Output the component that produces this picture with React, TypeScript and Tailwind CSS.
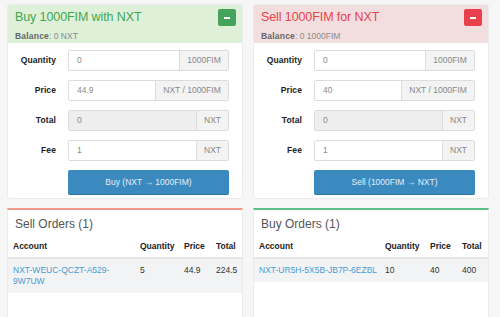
import React from "react";

type Field = { label: string; value: string; unit: string; unitW: string; disabled?: boolean };

function TradeForm({
  kind,
  title,
  balance,
  fields,
  action,
}: {
  kind: "buy" | "sell";
  title: string;
  balance: string;
  fields: Field[];
  action: string;
}) {
  const isBuy = kind === "buy";
  return (
    <div className="bg-white border border-[#ececec] rounded-[3px] h-[195px] flex flex-col">
      <div
        className={
          "h-[38px] px-[7px] pt-[3px] flex flex-col " +
          (isBuy ? "bg-[#dff0d8]" : "bg-[#f2dede]")
        }
      >
        <div className="flex items-center justify-between h-[19px]">
          <span
            className={
              "text-[12.5px] tracking-[-0.1px] leading-[19px] " +
              (isBuy ? "text-[#3fa656]" : "text-[#e8434b]")
            }
          >
            {title}
          </span>
          <button
            className={
              "w-[18px] h-[17px] rounded-[2px] flex items-center justify-center mr-[-1px] " +
              (isBuy ? "bg-[#45a45c]" : "bg-[#e8414b]")
            }
          >
            <span className="block w-[6px] h-[2px] bg-white" />
          </button>
        </div>
        <div className="text-[8.5px] leading-[12px] mt-[3px] text-[#8a8a8a]">
          <span className="font-bold text-[#666] tracking-[0.2px]">Balance</span>: {balance}
        </div>
      </div>
      <div className="flex flex-col gap-[9px] pt-[7px] pr-[13px]">
        {fields.map((f) => (
          <div key={f.label} className="flex items-center">
            <div className="w-[48px] text-right text-[8.5px] font-bold text-[#222] tracking-[0.1px]">
              {f.label}
            </div>
            <div className="ml-[12px] flex-1 flex h-[21px] border border-[#dcdcdc] rounded-[2px] overflow-hidden">
              <div
                className={
                  "flex-1 px-[8px] flex items-center text-[8.5px] text-[#8a8a8a] " +
                  (f.disabled ? "bg-[#eeeeee]" : "bg-white")
                }
              >
                {f.value}
              </div>
              <div
                className={
                  f.unitW +
                  " bg-[#f3f3f3] border-l border-[#dcdcdc] flex items-center justify-center text-[8.5px] text-[#888]"
                }
              >
                {f.unit}
              </div>
            </div>
          </div>
        ))}
        <div className="ml-[60px] h-[25px] bg-[#3a8ac0] border-b border-[#2f76a6] rounded-[2px] flex items-center justify-center text-[8.5px] text-[#e4eef7]">
          {action}
        </div>
      </div>
    </div>
  );
}

function Orders({
  kind,
  title,
  account,
  qty,
  price,
  total,
}: {
  kind: "buy" | "sell";
  title: string;
  account: string;
  qty: string;
  price: string;
  total: string;
}) {
  const cols = kind === "sell" ? "grid-cols-[127px_44px_32px_1fr]" : "grid-cols-[126px_45px_32px_1fr]";
  return (
    <div
      className={
        "bg-white border border-[#ececec] border-t-2 h-[120px] " +
        (kind === "sell" ? "border-t-[#f29a8c]" : "border-t-[#5cc08a]")
      }
    >
      <div className="px-[7px] pt-[4px] h-[25px] text-[12px] leading-[20px] text-[#555]">{title}</div>
      <div
        className={
          "grid pl-[5px] text-[8.5px] font-bold text-[#222] h-[24px] items-center border-b-2 border-[#e6e6e6] " +
          cols
        }
      >
        <span>Account</span>
        <span>Quantity</span>
        <span>Price</span>
        <span>Total</span>
      </div>
      <div
        className={
          "grid pl-[5px] pt-[6px] pb-[6px] bg-[#f2f3f5] text-[8.5px] leading-[11px] text-[#333] " + cols
        }
      >
        <span className="text-[#4a9bd0] pr-[6px] break-words">{account}</span>
        <span>{qty}</span>
        <span>{price}</span>
        <span>{total}</span>
      </div>
    </div>
  );
}

export default function App() {
  return (
    <div
      className="w-[500px] h-[317px] overflow-hidden bg-[#f6f6f6] pl-[7px] pt-[4px]"
      style={{ fontFamily: '"Liberation Sans", Arial, sans-serif' }}
    >
      <div className="grid grid-cols-[236px_236px] gap-x-[10px] gap-y-[9px]">
        <TradeForm
          kind="buy"
          title="Buy 1000FIM with NXT"
          balance="0 NXT"
          action="Buy (NXT → 1000FIM)"
          fields={[
            { label: "Quantity", value: "0", unit: "1000FIM", unitW: "w-[49px]" },
            { label: "Price", value: "44.9", unit: "NXT / 1000FIM", unitW: "w-[73px]" },
            { label: "Total", value: "0", unit: "NXT", unitW: "w-[32px]", disabled: true },
            { label: "Fee", value: "1", unit: "NXT", unitW: "w-[32px]" },
          ]}
        />
        <TradeForm
          kind="sell"
          title="Sell 1000FIM for NXT"
          balance="0 1000FIM"
          action="Sell (1000FIM → NXT)"
          fields={[
            { label: "Quantity", value: "0", unit: "1000FIM", unitW: "w-[49px]" },
            { label: "Price", value: "40", unit: "NXT / 1000FIM", unitW: "w-[73px]" },
            { label: "Total", value: "0", unit: "NXT", unitW: "w-[32px]", disabled: true },
            { label: "Fee", value: "1", unit: "NXT", unitW: "w-[32px]" },
          ]}
        />
        <Orders
          kind="sell"
          title="Sell Orders (1)"
          account="NXT-WEUC-QCZT-A529-9W7UW"
          qty="5"
          price="44.9"
          total="224.5"
        />
        <Orders
          kind="buy"
          title="Buy Orders (1)"
          account="NXT-UR5H-5X5B-JB7P-6EZBL"
          qty="10"
          price="40"
          total="400"
        />
      </div>
    </div>
  );
}
